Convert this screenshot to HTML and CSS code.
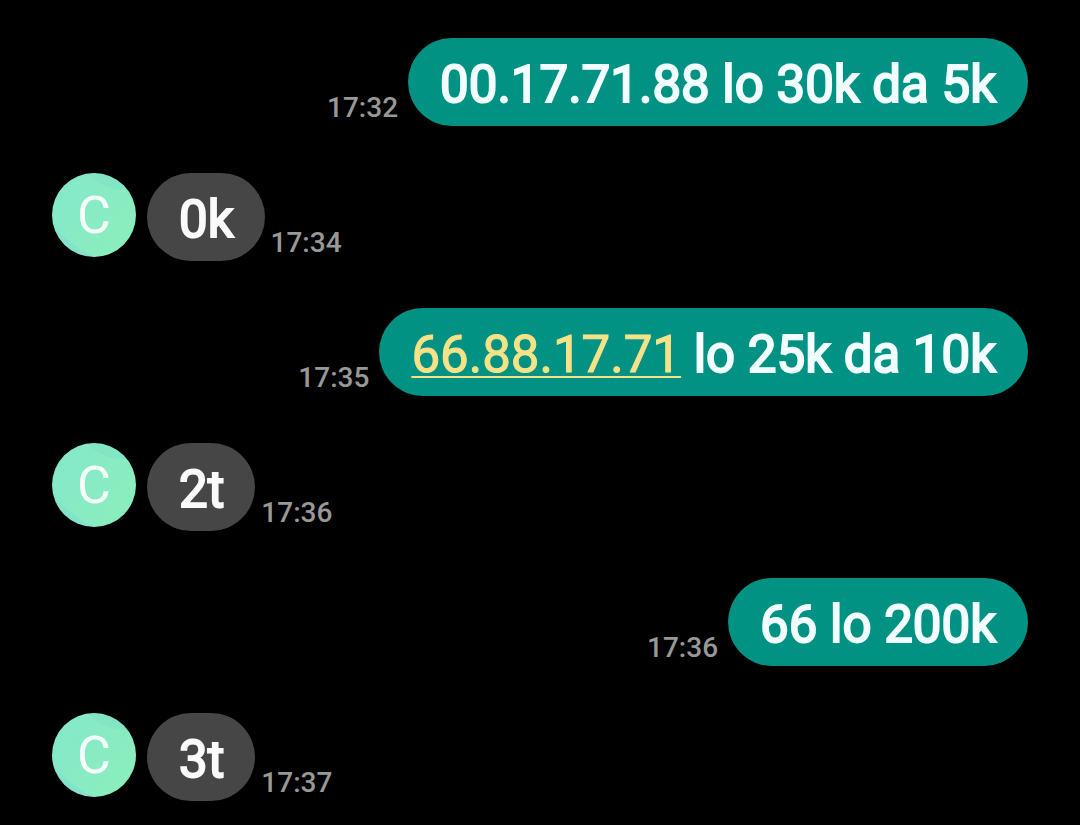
FILE: index.html
```html
<!DOCTYPE html>
<html lang="vi">
<head>
    <meta charset="UTF-8">
    <meta name="viewport" content="width=device-width, initial-scale=1.0">
    <title>Messages</title>
    <link rel="stylesheet" href="styles.css">
</head>
<body>
<main class="chat">
    <div class="message sent">
        <time class="time">17:32</time>
        <p class="bubble">00.17.71.88 lo 30k da 5k</p>
    </div>
    <div class="message received">
        <div class="avatar">C</div>
        <p class="bubble">0k</p>
        <time class="time">17:34</time>
    </div>
    <div class="message sent">
        <time class="time">17:35</time>
        <p class="bubble"><a href="tel:66881771">66.88.17.71</a> lo 25k da 10k</p>
    </div>
    <div class="message received">
        <div class="avatar">C</div>
        <p class="bubble">2t</p>
        <time class="time">17:36</time>
    </div>
    <div class="message sent">
        <time class="time">17:36</time>
        <p class="bubble">66 lo 200k</p>
    </div>
    <div class="message received">
        <div class="avatar">C</div>
        <p class="bubble">3t</p>
        <time class="time">17:37</time>
    </div>
</main>
</body>
</html>
```
FILE: styles.css
```css
*{
    box-sizing: border-box;
}
body{
    margin: 0;
    background: #000;
    font-family: Roboto, "Noto Sans", sans-serif;
}
.chat{
    display: flex;
    flex-direction: column;
    gap: 47px;
    padding: 38px 52px 24px;
}
.message{
    display: flex;
    align-items: flex-end;
}
.sent{
    justify-content: flex-end;
    gap: 10px;
}
.received{
    gap: 6px;
}
.bubble{
    margin: 0;
    padding: 17px 31px 11px 32px;
    border-radius: 44px;
    background: #464646;
    color: #fafafa;
    font-size: 51px;
    line-height: 60px;
    -webkit-text-stroke: 2px #fafafa;
}
.sent .bubble{
    padding: 17px 32px 11px;
    background: #019284;
    color: #f3fffe;
    -webkit-text-stroke-color: #f3fffe;
}
.sent .bubble a{
    color: #f8e287;
    -webkit-text-stroke: 1px #f8e287;
    text-decoration-thickness: 2px;
    text-underline-offset: 4px;
}
.time{
    color: #989898;
    font-size: 28px;
    font-weight: 500;
    line-height: 36px;
}
.avatar{
    align-self: flex-start;
    width: 84px;
    height: 84px;
    margin-right: 5px;
    border-radius: 50%;
    background:
        radial-gradient(circle at 90px -20px, transparent 114px, #82e2cb 115px, transparent 145px),
        radial-gradient(circle at 72px -34px, #82e6c5 50px, transparent 51px),
        linear-gradient(120deg, #84e7cb, #8cefbb);
    color: #f4fffb;
    font-size: 52px;
    line-height: 86px;
    text-align: center;
}
```
